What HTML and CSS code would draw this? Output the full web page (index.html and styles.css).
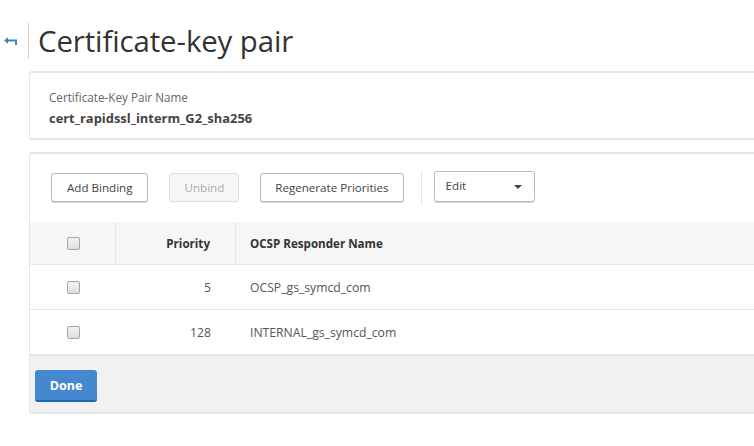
FILE: index.html
```html
<!DOCTYPE html>
<html>
<head>
<meta charset="utf-8">
<link rel="stylesheet" href="styles.css">
</head>
<body>
<div class="page">
  <div class="page-header">
    <a class="back" href="#">
      <svg width="13" height="9" viewBox="0 0 13 9"><path d="M12 8V3.5H2" fill="none" stroke="#3a86c8" stroke-width="2"/><path d="M0 3.5L4 0.2V6.8Z" fill="#3a86c8"/></svg>
    </a>
    <div class="divider"></div>
    <h1 class="title">Certificate-key pair</h1>
  </div>

  <div class="card info">
    <div class="info-label">Certificate-Key Pair Name</div>
    <div class="info-value">cert_rapidssl_interm_G2_sha256</div>
  </div>

  <div class="card main">
    <div class="toolbar">
      <button class="btn">Add Binding</button>
      <button class="btn disabled">Unbind</button>
      <button class="btn regen">Regenerate Priorities</button>
      <div class="tb-sep"></div>
      <div class="select">
        <span>Edit</span>
        <span class="caret"></span>
      </div>
    </div>
    <div class="table">
      <div class="row head">
        <div class="c-check"><span class="cb"></span></div>
        <div class="c-prio">Priority</div>
        <div class="c-name">OCSP Responder Name</div>
      </div>
      <div class="row">
        <div class="c-check"><span class="cb"></span></div>
        <div class="c-prio">5</div>
        <div class="c-name">OCSP_gs_symcd_com</div>
      </div>
      <div class="row">
        <div class="c-check"><span class="cb"></span></div>
        <div class="c-prio">128</div>
        <div class="c-name">INTERNAL_gs_symcd_com</div>
      </div>
    </div>
    <div class="footer">
      <button class="btn-primary">Done</button>
    </div>
  </div>
</div>
</body>
</html>
```

FILE: styles.css
```css
html, body {
  margin: 0;
  padding: 0;
  background: #fff;
  overflow: hidden;
  font-family: "Open Sans", "Noto Sans", sans-serif;
  color: #333;
}
.page {
  width: 754px;
  height: 446px;
  overflow: hidden;
}
.page-header {
  display: flex;
  align-items: center;
  height: 36px;
  margin-top: 23px;
}
.back {
  display: flex;
  width: 28px;
  padding-left: 4px;
  box-sizing: border-box;
  margin-top: 1px;
}
.divider {
  width: 1px;
  height: 36px;
  background: #cfcfcf;
}
.title {
  margin: 0 0 0 9px;
  font-size: 29.4px;
  font-weight: 400;
  color: #333;
  line-height: 36px;
  letter-spacing: -0.1px;
}
.card {
  margin-left: 29px;
  width: 760px;
  border: 1px solid #e4e4e4;
  border-top: 2px solid #e6e6e6;
  border-bottom: 2px solid #e6e6e6;
  border-radius: 3px;
  background: #fff;
  box-sizing: border-box;
}
.info {
  margin-top: 12px;
  height: 69px;
  padding: 15px 0 0 19px;
}
.info-label {
  font-size: 11.7px;
  color: #666;
  line-height: 18px;
}
.info-value {
  font-size: 12.9px;
  font-weight: 700;
  color: #444;
  line-height: 20px;
  margin-top: 2px;
}
.main {
  margin-top: 12px;
  height: 262px;
  display: flex;
  flex-direction: column;
}
.toolbar {
  display: flex;
  align-items: flex-start;
  padding: 19px 0 0 21px;
  height: 68px;
  box-sizing: border-box;
  gap: 21px;
}
.btn {
  height: 29px;
  padding: 0 15px;
  border: 1px solid #b8b8b8;
  border-radius: 3px;
  background: #fff;
  font-family: inherit;
  font-size: 11.6px;
  color: #444;
  box-shadow: 0 1px 0 #d4d4d4;
}
.btn.regen {
  padding: 0 14px;
}
.btn.disabled {
  color: #aaa;
  background: #f6f6f6;
  border-color: #dcdcdc;
  box-shadow: none;
  padding: 0 14px;
}
.tb-sep {
  width: 1px;
  height: 32px;
  background: #e2e2e2;
  margin-left: -4px;
  margin-top: -1px;
}
.select {
  display: flex;
  align-items: center;
  justify-content: space-between;
  width: 101px;
  height: 31px;
  box-sizing: border-box;
  padding: 0 12px 2px 11px;
  border: 1px solid #b8b8b8;
  border-radius: 3px;
  box-shadow: 0 1px 0 #d4d4d4;
  font-size: 11.6px;
  color: #444;
  margin-left: -9px;
  margin-top: -2px;
}
.caret {
  width: 0;
  height: 0;
  border-left: 4px solid transparent;
  border-right: 4px solid transparent;
  border-top: 4px solid #444;
  margin-top: 2px;
}
.row {
  display: flex;
  align-items: center;
  height: 45px;
  border-bottom: 1px solid #e6e6e6;
  box-sizing: border-box;
  font-size: 12.2px;
  color: #555;
}
.row.head {
  height: 43px;
  background: #f6f6f6;
  font-weight: 700;
  font-size: 11.6px;
  color: #333;
}
.row > div {
  height: 100%;
  display: flex;
  align-items: center;
  box-sizing: border-box;
}
.c-check {
  width: 86px;
  justify-content: center;
  padding-left: 1px;
}
.c-prio {
  width: 120px;
  justify-content: flex-end;
  padding-right: 25px;
}
.head .c-check, .head .c-prio {
  border-right: 1px solid #e6e6e6;
}
.c-name {
  padding-left: 14px;
}
.cb {
  display: block;
  width: 11px;
  height: 11px;
  border: 1px solid #a6a6a6;
  border-radius: 2px;
  background: linear-gradient(#f4f4f4, #dedede);
}
.footer {
  flex: 1;
  background: #f1f1f1;
  border-top: 1px solid #e4e4e4;
  padding: 14px 0 0 5px;
}
.btn-primary {
  width: 62px;
  height: 32px;
  border: none;
  border-bottom: 2px solid #1c68b3;
  border-radius: 3px;
  background: #4489cf;
  color: #fff;
  font-family: inherit;
  font-weight: 700;
  font-size: 12.5px;
  padding: 0;
}
```
